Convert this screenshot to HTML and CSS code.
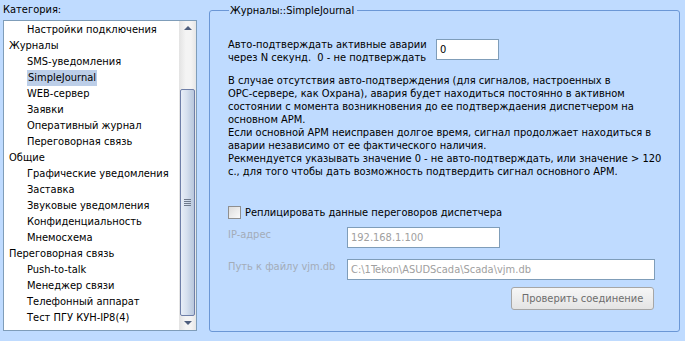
FILE: index.html
```html
<!DOCTYPE html>
<html lang="ru">
<head>
    <meta charset="UTF-8">
    <title>Настройки</title>
    <link rel="stylesheet" href="styles.css">
</head>
<body>
    <div class="window">
        <!-- Category tree -->
        <div class="categories">
            <div class="cat-label">Категория:</div>
            <div class="listbox">
                <div class="rows">
                    <div class="row sub">Настройки подключения</div>
                    <div class="row">Журналы</div>
                    <div class="row sub">SMS-уведомления</div>
                    <div class="row sub"><span class="selected">SimpleJournal</span></div>
                    <div class="row sub">WEB-сервер</div>
                    <div class="row sub">Заявки</div>
                    <div class="row sub">Оперативный журнал</div>
                    <div class="row sub">Переговорная связь</div>
                    <div class="row">Общие</div>
                    <div class="row sub">Графические уведомления</div>
                    <div class="row sub">Заставка</div>
                    <div class="row sub">Звуковые уведомления</div>
                    <div class="row sub">Конфиденциальность</div>
                    <div class="row sub">Мнемосхема</div>
                    <div class="row">Переговорная связь</div>
                    <div class="row sub">Push-to-talk</div>
                    <div class="row sub">Менеджер связи</div>
                    <div class="row sub">Телефонный аппарат</div>
                    <div class="row sub">Тест ПГУ КУН-IP8(4)</div>
                </div>
                <div class="scrollbar">
                    <div class="sb-btn"><span class="arrow-up"></span></div>
                    <div class="sb-track">
                        <div class="sb-thumb"><span class="grip"></span></div>
                    </div>
                    <div class="sb-btn"><span class="arrow-down"></span></div>
                </div>
            </div>
        </div>

        <!-- Settings group -->
        <fieldset class="group">
            <legend>Журналы::SimpleJournal</legend>

            <div class="confirm-row">
                <label class="confirm-label" for="confirmSec">Авто-подтверждать активные аварии<br>через N секунд.&nbsp; 0 - не подтверждать</label>
                <input type="text" id="confirmSec" class="field short" value="0">
            </div>

            <p class="note">
                В случае отсутствия авто-подтверждения (для сигналов, настроенных в<br>
                OPC-сервере, как Охрана), авария будет находиться постоянно в активном<br>
                состоянии с момента возникновения до ее подтверждаения диспетчером на<br>
                основном АРМ.<br>
                Если основной АРМ неисправен долгое время, сигнал продолжает находиться в<br>
                аварии независимо от ее фактического наличия.<br>
                Рекмендуется указывать значение 0 - не авто-подтверждать, или значение &gt; 120<br>
                с., для того чтобы дать возможность подтвердить сигнал основного АРМ.
            </p>

            <div class="check-row">
                <span class="checkbox"></span>
                <span>Реплицировать данные переговоров диспетчера</span>
            </div>

            <div class="field-row">
                <span class="field-label">IP-адрес</span>
                <input type="text" class="field ip" value="192.168.1.100" disabled>
            </div>

            <div class="field-row path-row">
                <span class="field-label">Путь к файлу vjm.db</span>
                <input type="text" class="field path" value="C:\1Tekon\ASUDScada\Scada\vjm.db" disabled>
            </div>

            <div class="actions">
                <button class="btn" disabled>Проверить соединение</button>
            </div>
        </fieldset>
    </div>
</body>
</html>
```
FILE: styles.css
```css
body {
    margin: 0;
    padding: 0;
    background-color: #bfdbff;
    font-family: "DejaVu Sans Condensed", "DejaVu Sans", sans-serif;
    font-size: 11px;
    line-height: 13px;
    color: #000;
}
.window {
    display: flex;
    width: 685px;
    height: 341px;
}

/* left tree */
.categories {
    flex-shrink: 0;
    width: 194px;
    padding: 3px 0 0 3px;
}
.cat-label {
    height: 13px;
    margin-bottom: 4px;
}
.listbox {
    display: flex;
    height: 309px;
    background: #fff;
    border: 1px solid #7f9db9;
}
.rows {
    flex: 1;
    padding-top: 1px;
    overflow: hidden;
}
.row {
    height: 16px;
    line-height: 16px;
    padding-left: 5px;
    white-space: nowrap;
}
.row.sub {
    padding-left: 23px;
}
.selected {
    display: inline-block;
    padding: 0 1px;
    background: #bccee8;
}
.scrollbar {
    width: 17px;
    display: flex;
    flex-direction: column;
    background: linear-gradient(to right, #e3e3e3, #f4f4f4 40%, #f4f4f4 70%, #e6e6e6);
}
.sb-btn {
    height: 17px;
    display: flex;
    align-items: center;
    justify-content: center;
}
.arrow-up,
.arrow-down {
    width: 0;
    height: 0;
    border-left: 4px solid transparent;
    border-right: 4px solid transparent;
}
.arrow-up {
    border-bottom: 4px solid #4e5e7d;
}
.arrow-down {
    border-top: 4px solid #4e5e7d;
}
.sb-track {
    flex: 1;
    padding-top: 53px;
}
.sb-thumb {
    height: 225px;
    margin: 0 1px;
    border: 1px solid #6f7fa8;
    border-radius: 2px;
    background: linear-gradient(to right, #e8eef7, #d6e0ee 45%, #c4d1e4 75%, #b9c7dc);
    display: flex;
    align-items: center;
    justify-content: center;
}
.grip {
    width: 7px;
    height: 7px;
    background: repeating-linear-gradient(to bottom, #6f7a8c 0 1px, transparent 1px 2px);
}

/* right group */
.group {
    flex-shrink: 0;
    box-sizing: border-box;
    width: 471px;
    height: 328px;
    margin: 4px 0 0 12px;
    padding: 0 0 0 18px;
    border: 1px solid #6b97d6;
    border-radius: 3px;
    min-inline-size: 0;
}
.group legend {
    padding: 0 3px 0 1px;
    margin-left: 1px;
    line-height: 13px;
}
.confirm-row {
    display: flex;
    margin-top: 21px;
}
.confirm-label {
    width: 208px;
}
.field {
    height: 21px;
    box-sizing: border-box;
    padding: 0 3px;
    border: 1px solid #7f9db9;
    background: #fff;
    font-family: inherit;
    font-size: 11px;
    color: #000;
}
.field:disabled {
    color: #a0a0a0;
    background: #fff;
}
.short {
    width: 63px;
    margin-top: 1px;
}
.note {
    margin: 10px 0 0;
    white-space: nowrap;
}
.check-row {
    display: flex;
    align-items: center;
    gap: 4px;
    margin-top: 28px;
}
.checkbox {
    width: 11px;
    height: 11px;
    border: 1px solid #8f8f8f;
    background: linear-gradient(135deg, #dcdcdc, #fafafa);
}
.field-row {
    display: flex;
    align-items: flex-start;
    margin-top: 8px;
}
.field-row.path-row {
    margin-top: 11px;
}
.field-label {
    width: 119px;
    padding-top: 1px;
    color: #a3acb8;
}
.ip {
    width: 153px;
}
.path {
    width: 308px;
}
.actions {
    display: flex;
    justify-content: flex-end;
    width: 426px;
    margin-top: 7px;
}
.btn {
    width: 143px;
    height: 23px;
    font-family: inherit;
    font-size: 11px;
    color: #6d6d6d;
    border: 1px solid #a6a6a6;
    border-radius: 3px;
    background: linear-gradient(to bottom, #f6f6f6, #e4e4e4);
}
```
